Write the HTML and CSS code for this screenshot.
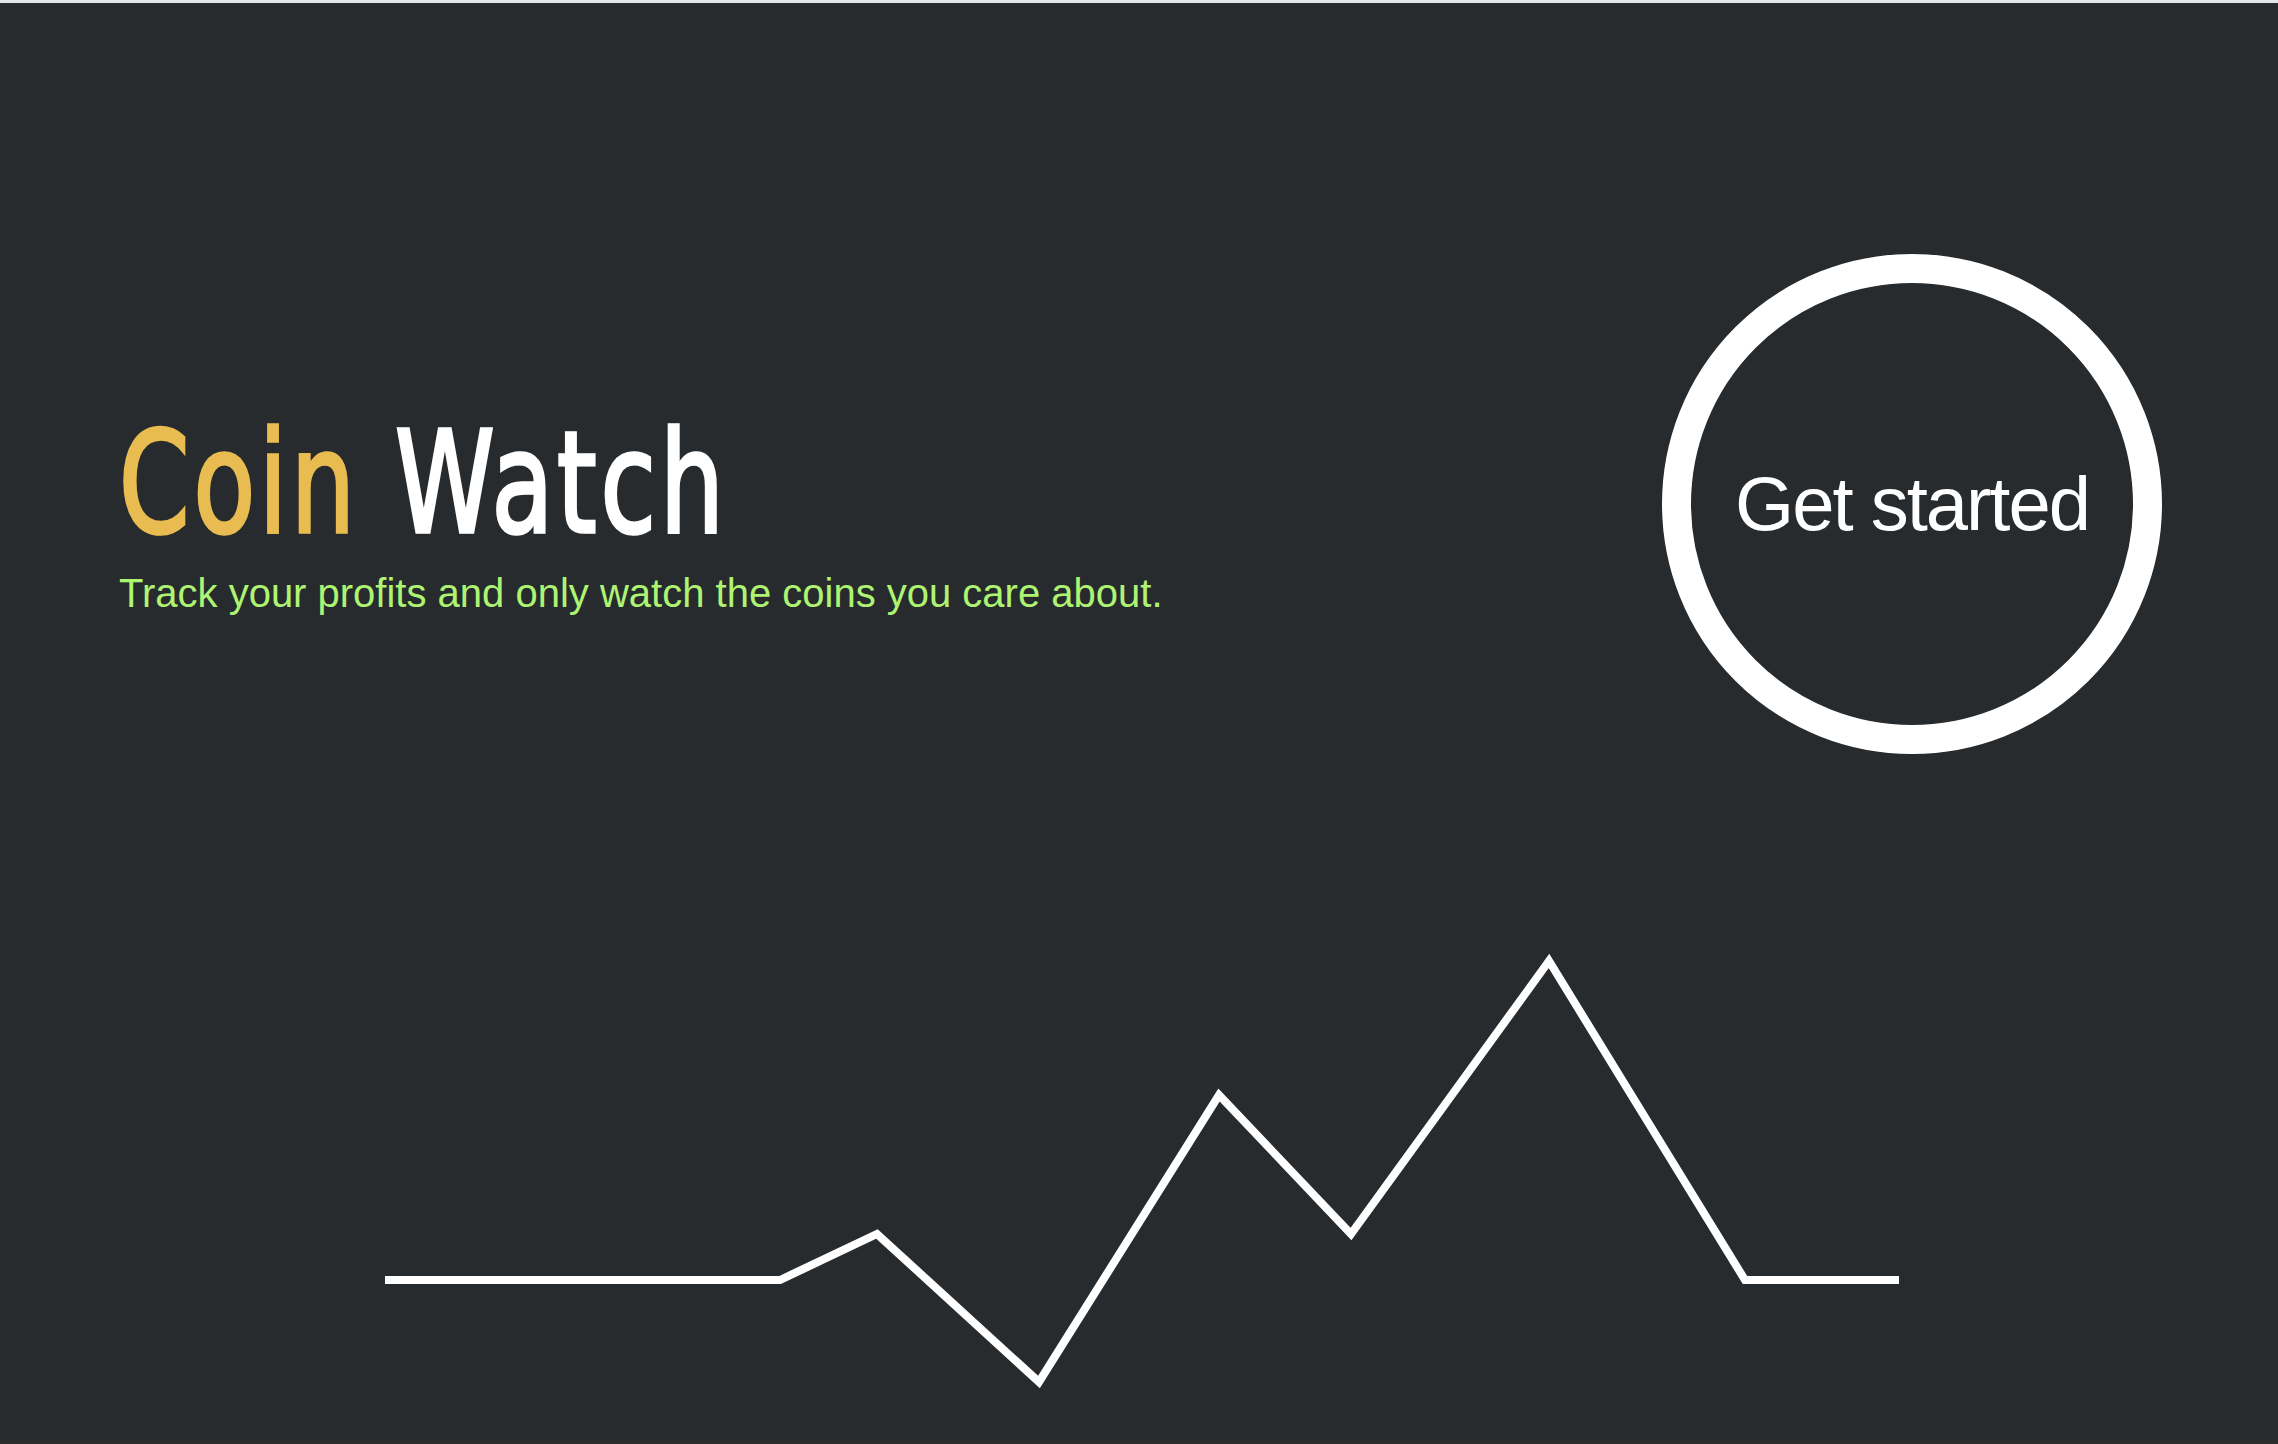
FILE: index.html
```html
<!DOCTYPE html>
<html lang="en">
<head>
<meta charset="utf-8">
<title>Coin Watch</title>
<link rel="stylesheet" href="styles.css">
</head>
<body>
<div class="topbar"></div>
<main class="hero">
  <div class="intro">
    <h1 class="title"><span class="coin">Coin</span> <span class="watch">Watch</span></h1>
    <p class="tagline">Track your profits and only watch the coins you care about.</p>
  </div>
  <a class="start" href="#">Get started</a>
</main>
<div class="chart">
  <svg width="2278" height="541" viewBox="0 0 2278 541" xmlns="http://www.w3.org/2000/svg">
    <polyline points="385,380 780,380 877,334 1039,482 1219,195 1351,334 1549,61 1745,380 1899,380" fill="none" stroke="#ffffff" stroke-width="8" stroke-linejoin="miter" stroke-miterlimit="10" stroke-linecap="butt"/>
  </svg>
</div>
<div class="bottombar"></div>
</body>
</html>
```

FILE: styles.css
```css
html, body {
  margin: 0;
  padding: 0;
}
body {
  background: #272b2e;
  height: 1444px;
  overflow: hidden;
}
.topbar {
  height: 3px;
  background: #e6e6e6;
}
.hero {
  display: flex;
  justify-content: space-between;
  align-items: flex-start;
  padding: 251px 116px 0 119px;
}
.intro {
  margin-top: 160px;
}
.title {
  margin: 0;
  font-family: "DejaVu Sans Condensed", "DejaVu Sans", sans-serif;
  font-stretch: condensed;
  font-weight: normal;
  font-size: 140px;
  line-height: 1;
  letter-spacing: 5px;
  -webkit-text-stroke: 3.5px;
  white-space: nowrap;
  transform: scaleX(0.8);
  transform-origin: left center;
  width: 600px;
}
.coin {
  color: #e9bc51;
}
.watch {
  color: #ffffff;
}
.tagline {
  margin: 19px 0 0 0;
  font-family: "Liberation Sans", Arial, sans-serif;
  font-size: 40px;
  line-height: 1;
  color: #aef472;
  white-space: nowrap;
}
.start {
  box-sizing: border-box;
  width: 500px;
  height: 500px;
  border: 29px solid #ffffff;
  border-radius: 50%;
  display: flex;
  align-items: center;
  justify-content: center;
  color: #ffffff;
  text-decoration: none;
  font-family: "Liberation Sans", Arial, sans-serif;
  font-size: 76px;
  letter-spacing: -2px;
  line-height: 1;
}
.chart {
  margin-top: 146px;
  height: 541px;
}
.chart svg {
  display: block;
}
.bottombar {
  height: 3px;
  background: #2f2e2c;
}
```
